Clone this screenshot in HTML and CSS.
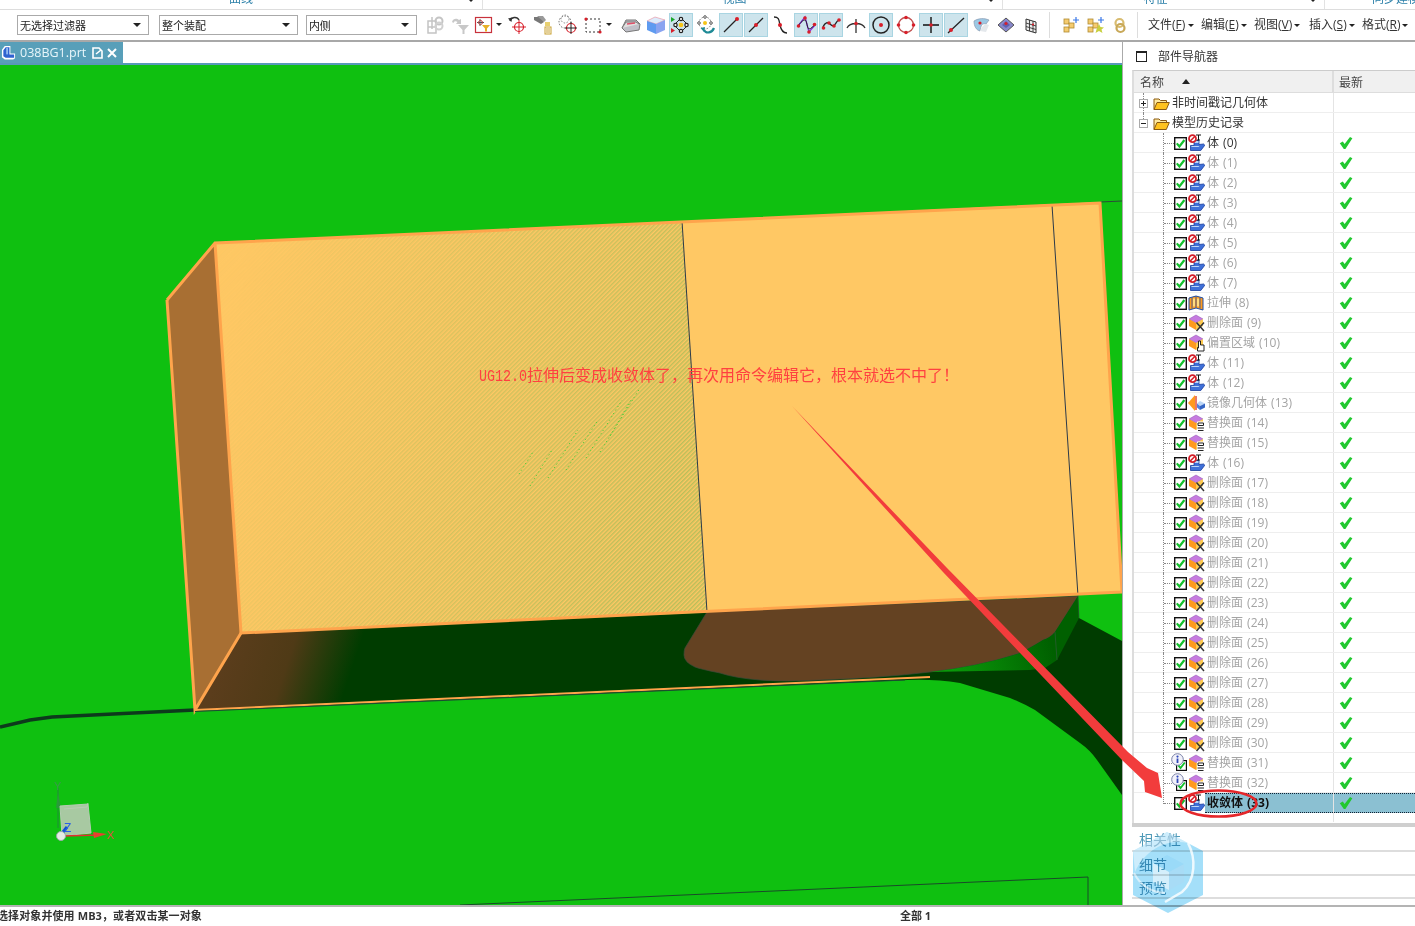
FILE: index.html
```html
<!DOCTYPE html>
<html lang="zh">
<head>
<meta charset="utf-8">
<title>038BG1.prt</title>
<link rel="stylesheet" href="styles.css">
</head>
<body>
<svg class="defs" width="0" height="0">
  <defs>
    <symbol id="i-chk" viewBox="0 0 13 13"><rect x=".7" y=".7" width="11.6" height="11.6" fill="#fff" stroke="#111" stroke-width="1.4"/><path d="M2.8 6.4 5.4 9.4 10.4 3" fill="none" stroke="#12c02c" stroke-width="2.2"/></symbol>
    <symbol id="i-ok" viewBox="0 0 14 14"><path d="M.8 7.2 3.8 5.4 5.6 8 11 1l2.4 1.2L6.4 13H4.8z" fill="#22c830"/></symbol>
    <symbol id="i-body" viewBox="0 0 17 18"><path d="M6 6.5h5v4l4.600-.5 1.200 1.200-4 5.300H2.500v-5H6z" fill="#3f70d8" stroke="#1c3e9c" stroke-width=".8"/><path d="M6.500 7h4v2h-4zM3.500 12h8l-1 1h-7z" fill="#bcd6f6"/><path d="M8 1h5M10.500 1v5M9 6h3" stroke="#111" fill="none"/><circle cx="4.500" cy="4.700" r="3.500" fill="#fff" stroke="#d4202a" stroke-width="1.800"/><path d="M2 7.200 7 2.200" stroke="#d4202a" stroke-width="1.600"/></symbol>
    <symbol id="i-del" viewBox="0 0 17 18"><path d="M8 1 15 5 8 9 1 5z" fill="#c67be0" stroke="#8d4fb0" stroke-width=".5"/><path d="M1 5 8 9V16L1 12z" fill="#ff9a1f"/><path d="M8 9 15 5V12L8 16z" fill="#ffcb50"/><path d="M8.500 8.500 16 17M16 8.500 8.500 17" stroke="#333" stroke-width="1.500"/></symbol>
    <symbol id="i-sub" viewBox="0 0 17 18"><path d="M8 1 15 5 8 9 1 5z" fill="#c67be0" stroke="#8d4fb0" stroke-width=".5"/><path d="M1 5 8 9V16L1 12z" fill="#ff9a1f"/><path d="M8 9 15 5V12L8 16z" fill="#ffcb50"/><rect x="9" y="7.500" width="7.500" height="9.500" fill="#fff"/><path d="M10 9h5.500M10 9v2.500h5.500V9M9.500 14h6.500M10 16.500h5.500" stroke="#222" fill="none"/></symbol>
    <symbol id="i-off" viewBox="0 0 17 18"><path d="M8 1 15 5 8 9 1 5z" fill="#c67be0" stroke="#8d4fb0" stroke-width=".5"/><path d="M1 5 8 9V16L1 12z" fill="#ff9a1f"/><path d="M8 9 15 5V12L8 16z" fill="#ffcb50"/><path d="M10.500 7h2v4h3.500v6H9.500v-3.500l1 .5z" fill="#fff" stroke="#111" stroke-width=".9"/></symbol>
    <symbol id="i-ext" viewBox="0 0 17 18"><path d="M1 4 8 2l7 2v12l-7-2-7 2z" fill="#ff9c20" stroke="#1f4fa8" stroke-width="1"/><path d="M8 2v12M4 3.500v11M12 3.500v11" stroke="#1f4fa8" stroke-width=".8"/><path d="M5 4.500h2v8H5zM9 4.500h2v8H9z" fill="#ffdc80"/></symbol>
    <symbol id="i-mir" viewBox="0 0 17 18"><path d="M7 1v16L0 9z" fill="#ff9a1f"/><path d="M8 2v14" stroke="#e0402a" stroke-width="1.400"/><path d="M12 7l5 2.500-5 2.500-3-2.500z" fill="#bcd6f6"/><path d="M9 9.500l3 2.500v4l-3-2.500z" fill="#4f80de"/><path d="M12 12l5-2.500v4L12 16z" fill="#3565c4"/></symbol>
    <symbol id="i-info" viewBox="0 0 13 13"><circle cx="6.500" cy="6.500" r="5.800" fill="#f2f2fa" stroke="#7a82a8"/><circle cx="6.500" cy="3.600" r="1.100" fill="#2f48b8"/><path d="M6.500 5.500v4.500" stroke="#2f48b8" stroke-width="1.800"/></symbol>
    <symbol id="i-folder" viewBox="0 0 17 15"><path d="M1 13.500V3h5l1.500 1.500h6V7" fill="#ffe9a0" stroke="#8a5a10"/><path d="M1 13.500 4 6.500h12.300l-3 7z" fill="#ffc21e" stroke="#8a5a10"/></symbol>
  </defs>
</svg>

<div class="strip">
  <div class="grp g1"><span class="gl">曲线</span></div>
  <div class="grp g2"><span class="gl">视图</span></div>
  <div class="grp g3"><span class="gl">特征</span></div>
  <div class="grp g4"><span class="gl">同步建模</span></div>
</div>

<div class="toolbar">
  <div class="sel s1">无选择过滤器</div>
  <div class="sel s2">整个装配</div>
  <div class="sel s3">内侧</div>
  <div class="btn">
    <svg viewBox="0 0 22 22"><path d="M4 7h8v12H4zM4 13h8M8 3v12" fill="none" stroke="#c4c4c4" stroke-width="1.500"/><circle cx="15" cy="7" r="3.500" fill="none" stroke="#c4c4c4" stroke-width="2"/><circle cx="15" cy="12" r="3.500" fill="none" stroke="#d0d0d0" stroke-width="2"/></svg>
  </div>
  <div class="btn">
    <svg viewBox="0 0 22 22"><path d="M3 8c1-4 5-4 7-2l2-1v5H7l1.500-2C7 7 5 7 4.500 9z" fill="#c8c8c8"/><path d="M9 11h11l-4.500 5v4h-2v-4z" fill="#c8c8c8"/></svg>
  </div>
  <div class="btn nar">
    <svg viewBox="0 0 22 22"><rect x="2.500" y="3.500" width="16" height="15" fill="#fff" stroke="#c8323c" stroke-width="1.200"/><path d="M7 5v7M4 8.500h7" stroke="#555"/><circle cx="7.500" cy="8.500" r="2" fill="none" stroke="#b44"/><path d="M9 11h8l-3 3.500v3h-2v-3z" fill="#e8b028"/></svg>
  </div>
  <div class="car"></div>
  <div class="btn">
    <svg viewBox="0 0 22 22"><circle cx="12" cy="13" r="4.500" fill="none" stroke="#d81f2a" stroke-width="1.200"/><path d="M12 6v14M5 13h14" stroke="#d81f2a"/><path d="M3 7c1-4 7-5 9-1" fill="none" stroke="#333" stroke-width="1.500"/><path d="M1 4.500 5 3.500 4.500 8z" fill="#333"/></svg>
  </div>
  <div class="btn">
    <svg viewBox="0 0 22 22"><path d="M2 3h7l3 5-3 2-7-4z" fill="#777"/><path d="M5 2h6l3 4-2 2z" fill="#999"/><rect x="13" y="8" width="5" height="4" fill="#e8d070"/><rect x="13" y="13" width="6" height="7" fill="#fff" stroke="#c8a030"/><path d="M15 14v5M17 14v5" stroke="#c8a030"/></svg>
  </div>
  <div class="btn">
    <svg viewBox="0 0 22 22"><circle cx="8" cy="8" r="6" fill="none" stroke="#666" stroke-dasharray="1.500 1.500"/><circle cx="8" cy="5" r="4" fill="none" stroke="#888" stroke-dasharray="1.500 1.500"/><circle cx="14" cy="14" r="4.500" fill="#fff" stroke="#d81f2a" stroke-width="1.200"/><path d="M14 8v12M8 14h12" stroke="#222"/></svg>
  </div>
  <div class="btn">
    <svg viewBox="0 0 22 22"><rect x="4" y="5" width="14" height="13" fill="none" stroke="#333" stroke-dasharray="2 2"/><circle cx="4" cy="5" r="1.600" fill="#d81f2a"/><circle cx="18" cy="18" r="1.600" fill="#d81f2a"/></svg>
  </div>
  <div class="car wide"></div>
  <div class="btn">
    <svg viewBox="0 0 22 22"><path d="M6 6h10l4 4-1 6-13 2-4-4z" fill="#c0c0c8" stroke="#777"/><path d="M2 14l4-6h10l3 2" fill="#e0e0e0" stroke="#777"/><path d="M7 10l8-1" stroke="#e0506a" stroke-width="1.500"/></svg>
  </div>
  <div class="btn">
    <svg viewBox="0 0 22 22"><path d="M2 7l8-4 10 3-9 4z" fill="#dcebfb" stroke="#e89aa8" stroke-width=".7"/><path d="M2 7l9 3v10l-9-4z" fill="#5f9bf0"/><path d="M11 10l9-4v10l-9 4z" fill="#8aa4f0"/></svg>
  </div>
  <div class="btn act">
    <svg viewBox="0 0 22 22"><path d="M11 4 18 11 11 18 4 11z" fill="none" stroke="#222"/><circle cx="11" cy="11" r="2.300" fill="#f5c518"/><g fill="#fff" stroke="#222" stroke-width="1.200"><circle cx="11" cy="5" r="1.700"/><circle cx="11" cy="17" r="1.700"/><circle cx="5.500" cy="11" r="1.700"/><circle cx="16.500" cy="11" r="1.700"/></g><path d="M1 3l4 2.500L1 8z" fill="#1aa82a"/><path d="M1 14l4 2.500L1 19z" fill="#d81f2a"/></svg>
  </div>
  <div class="btn">
    <svg viewBox="0 0 22 22"><circle cx="10" cy="9" r="6" fill="none" stroke="#777" stroke-dasharray="1.500 1.500"/><circle cx="10" cy="9" r="2" fill="#f5c518"/><g fill="#fff" stroke="#555"><circle cx="10" cy="3" r="1.300"/><circle cx="4" cy="9" r="1.300"/><circle cx="16" cy="9" r="1.300"/></g><path d="M9 16c2 4 8 3 10-2" fill="none" stroke="#1f8a96" stroke-width="2.200"/><path d="M5.500 14 10 13l-1 5z" fill="#1f8a96"/></svg>
  </div>
  <div class="btn act">
    <svg viewBox="0 0 22 22"><path d="M4 18 17 5" stroke="#222" stroke-width="1.300"/><circle cx="17" cy="5" r="2" fill="#d81f2a"/></svg>
  </div>
  <div class="btn act">
    <svg viewBox="0 0 22 22"><path d="M4 18 18 4" stroke="#222" stroke-width="1.300"/><circle cx="11" cy="11" r="2" fill="#d81f2a"/></svg>
  </div>
  <div class="btn">
    <svg viewBox="0 0 22 22"><path d="M4 3c5 0 5 3 6 8s3 8 7 8" fill="none" stroke="#222" stroke-width="1.300"/><circle cx="10" cy="11" r="2" fill="#d81f2a"/></svg>
  </div>
  <div class="btn act">
    <svg viewBox="0 0 22 22"><path d="M3 12 10 3l4 15 6-7" fill="none" stroke="#8a2be2" stroke-width="1.300"/><path d="M3 12c3-4 5-6 7-6s2 9 4 9 4-3 6-4" fill="none" stroke="#222"/><g fill="#d81f2a"><circle cx="3.500" cy="12" r="1.800"/><circle cx="10" cy="4" r="1.800"/><circle cx="14" cy="18" r="1.800"/><circle cx="19.500" cy="10.500" r="1.800"/></g></svg>
  </div>
  <div class="btn act">
    <svg viewBox="0 0 22 22"><path d="M3 13c2-5 5-5 7-3s4 3 6-1 3-2 4-3" fill="none" stroke="#222" stroke-width="1.400"/><g fill="#d81f2a"><circle cx="3.500" cy="14" r="1.800"/><circle cx="9" cy="9" r="1.800"/><circle cx="14" cy="12" r="1.800"/><circle cx="19" cy="6" r="1.800"/></g></svg>
  </div>
  <div class="btn">
    <svg viewBox="0 0 22 22"><path d="M2 14C5 8 17 8 20 14M11 5v14" fill="none" stroke="#333" stroke-width="1.300"/><circle cx="11" cy="9.500" r="1.800" fill="#d81f2a"/></svg>
  </div>
  <div class="btn act">
    <svg viewBox="0 0 22 22"><circle cx="11" cy="11" r="8" fill="none" stroke="#222" stroke-width="1.500"/><circle cx="11" cy="11" r="2" fill="#d81f2a"/></svg>
  </div>
  <div class="btn">
    <svg viewBox="0 0 22 22"><circle cx="11" cy="11" r="7.500" fill="none" stroke="#c05050" stroke-width="1.300"/><g fill="#d81f2a"><circle cx="11" cy="3.500" r="1.800"/><circle cx="11" cy="18.500" r="1.800"/><circle cx="3.500" cy="11" r="1.800"/><circle cx="18.500" cy="11" r="1.800"/></g></svg>
  </div>
  <div class="btn act">
    <svg viewBox="0 0 22 22"><path d="M11 3v16M3 11h16" stroke="#111" stroke-width="1.400"/><circle cx="11" cy="11" r="1.800" fill="#d81f2a"/></svg>
  </div>
  <div class="btn act">
    <svg viewBox="0 0 22 22"><path d="M3 19 19 4" stroke="#222" stroke-width="1.300"/><circle cx="6" cy="16" r="2" fill="#d81f2a"/></svg>
  </div>
  <div class="btn">
    <svg viewBox="0 0 22 22"><path d="M4 7c5-3 10-3 15-1l-3 4c-4-1-5 1-6 7-4-1-6-5-6-10z" fill="#9cc8e4" stroke="#8a9ab0" stroke-width=".7"/><path d="M10 17c2-4 3-6 6-7l3 1-3 7z" fill="#e4e8ec"/><circle cx="10" cy="9" r="1.600" fill="#d81f2a"/></svg>
  </div>
  <div class="btn">
    <svg viewBox="0 0 22 22"><path d="M3 11 11 4l8 7-8 7z" fill="#8888cc" stroke="#555"/><path d="M7 11l4-4 4 4-4 3z" fill="#6060b0"/><circle cx="11" cy="9.500" r="1.600" fill="#d81f2a"/></svg>
  </div>
  <div class="btn">
    <svg viewBox="0 0 22 22"><path d="M6 5l10 3v11L6 16z" fill="#eee" stroke="#333"/><path d="M9.500 6v11M13 7v11M6 9l10 3M6 12.500l10 3" stroke="#333" stroke-width=".9"/><circle cx="13" cy="10.500" r="1.100" fill="#d81f2a"/></svg>
  </div>
  <div class="sep s-a"></div>
  <div class="btn">
    <svg viewBox="0 0 22 22"><g fill="#f5cc70" stroke="#b08a30" stroke-width=".8"><rect x="5" y="5" width="5" height="5"/><rect x="5" y="13" width="5" height="5"/><rect x="10" y="9" width="5" height="5"/></g><path d="M17 3v6M14 6h6" stroke="#3a78e8" stroke-width="1.200"/></svg>
  </div>
  <div class="btn">
    <svg viewBox="0 0 22 22"><g fill="#f5cc70" stroke="#b08a30" stroke-width=".8"><rect x="4" y="5" width="5" height="5"/><rect x="4" y="13" width="5" height="5"/><rect x="9" y="9" width="5" height="5"/></g><path d="M15 10l1.500 3 3.500.5-2.500 2 1 3.500-3.500-2-3.500 2 1-3.500" fill="#c8d040"/><path d="M17 3v6M14 6h6" stroke="#3a78e8" stroke-width="1.200"/></svg>
  </div>
  <div class="btn">
    <svg viewBox="0 0 22 22"><circle cx="10.500" cy="9" r="4" fill="none" stroke="#d8bc70" stroke-width="2.200"/><circle cx="11.500" cy="14" r="4" fill="none" stroke="#c8a858" stroke-width="2.200"/></svg>
  </div>
  <div class="sep s-b"></div>
  <div class="menus">
    <div class="menu">文件(<u>F</u>)</div>
    <div class="menu">编辑(<u>E</u>)</div>
    <div class="menu m3">视图(<u>V</u>)</div>
    <div class="menu">插入(<u>S</u>)</div>
    <div class="menu">格式(<u>R</u>)</div>
  </div>
</div>

<div class="main">
  <div class="view">
    <div class="tabs">
      <div class="tab">
        <svg class="tab-ic" viewBox="0 0 16 16"><path d="M4 1h6v8h5v5l-2 1.500H4L1 13V5z" fill="#fff"/><path d="M5 2.500h4v7.500h5v3.500H5l-2.500-1.500V5.500z" fill="#2f62d0"/><path d="M5.500 3h2v7h-2z" fill="#8fb8f0"/></svg>
        <span class="tab-t">038BG1.prt</span>
        <svg class="tab-p" viewBox="0 0 11 12"><path d="M1 1h6l3 3v7H1z" fill="none" stroke="#fff" stroke-width="1.600"/><path d="M4 7 9 3" stroke="#fff" stroke-width="1.600"/></svg>
        <svg class="tab-x" viewBox="0 0 10 10"><path d="M1 1 9 9M9 1 1 9" stroke="#fff" stroke-width="2"/></svg>
      </div>
    </div>
    <div class="band"></div>
    <svg class="scene" viewBox="0 65 1122 840" width="1122" height="840">
      <defs>
        <pattern id="hatch" patternUnits="userSpaceOnUse" width="3" height="3" patternTransform="rotate(45)"><rect width="1.500" height="3" fill="#a8bc58"/></pattern>
        <linearGradient id="hfade" gradientUnits="userSpaceOnUse" x1="230" y1="300" x2="690" y2="420"><stop offset="0" stop-color="#fff" stop-opacity=".03"/><stop offset=".5" stop-color="#fff" stop-opacity=".45"/><stop offset="1" stop-color="#fff" stop-opacity=".8"/></linearGradient>
        <mask id="hmask" maskUnits="userSpaceOnUse" x="0" y="65" width="1122" height="840"><rect x="0" y="65" width="1122" height="840" fill="url(#hfade)"/></mask>
        <linearGradient id="under" gradientUnits="userSpaceOnUse" x1="225" y1="650" x2="345" y2="690"><stop offset="0" stop-color="#5b3d1c"/><stop offset=".5" stop-color="#4f3a16"/><stop offset="1" stop-color="#003c00"/></linearGradient>
        <linearGradient id="gfade" gradientUnits="userSpaceOnUse" x1="950" y1="670" x2="1050" y2="640"><stop offset="0" stop-color="#0a9a0a"/><stop offset="1" stop-color="#006000"/></linearGradient>
      </defs>
      <rect x="0" y="65" width="1122" height="840" fill="#0fc010"/>
      <path d="M0 727 30 720 52 717 195 710" fill="none" stroke="#0d3a1c" stroke-width="3.500"/>
      <path d="M241 633 1078 596 1079 618 1122 641V795L1097 760Q1090 750 1080 743L1035 710Q1025 704 1010 698L960 683Q935 679 908 680L195 711z" fill="#003c00"/>
      <path d="M241 633 195 710 352 703 372 627z" fill="url(#under)"/>
      <path d="M707 612 1078 596 1055 632Q1050 638 1043 640 1030 648 1020 653 980 666 930 672 880 678 820 680 785 682 760 680 735 678 720 673 700 669 695 667 684 662 684 655 684 650 685 648z" fill="#644222" stroke="#3f4a3a" stroke-width=".7"/>
      <path d="M1078 596 1055 632Q1050 638 1043 640 1030 648 1020 653 980 666 930 672L1030 670 1045 668 1057 660 1079 618z" fill="url(#gfade)"/>
      <path d="M1055 632 1057 660M1079 618 1078 596" stroke="#2f5a3a" stroke-width=".7"/>
      <path d="M167 300 215 243 241 633 195 710z" fill="#a86f33"/>
      <path d="M215 243 1100 202 1122 592 241 633z" fill="#ffc864"/>
      <path d="M215 243 682 221 707 612 241 633z" fill="url(#hatch)" mask="url(#hmask)"/>
      <path d="M519 474l14-22M530 486l22-36M548 478l30-48M566 470l32-50M586 458l36-58M610 436l22-38M600 452l40-64" fill="none" stroke="#35d030" stroke-width="1" stroke-dasharray="1 3"/>
      <path d="M682 221 707 612M1052 205 1078 596" stroke="#2c3a4a" stroke-width="1"/>
      <path d="M1100 202 1122 201" stroke="#2c4a3a"/>
      <g fill="none" stroke="#ffa44c" stroke-width="3">
        <path d="M167 300 215 243 1100 203 1122 592 241 633 215 243"/>
        <path d="M167 300 195 710 241 633"/>
      </g>
      <path d="M195 710 930 677" stroke="#ffa44c" stroke-width="2"/>
      <path d="M195 711.500 905 680" stroke="#1d4a34" stroke-width="1"/>
      <path d="M460 905 1088 877V905" fill="none" stroke="#1a4a2a"/>
      <g class="gizmo">
        <path d="M58 788V828" stroke="#1c9c2c" stroke-width="1.500"/>
        <path d="M56 808 58 792 61 808z" fill="#2a9a3a"/>
        <path d="M60 806 88 804 91 833 62 836z" fill="#a8c9a2" stroke="#b5ccb2"/>
        <path d="M64 809 87 807 88 803" fill="none" stroke="#b8ccb4"/>
        <path d="M62 836 100 835" stroke="#e03030" stroke-width="1.500"/>
        <path d="M93 832 107 834 94 838z" fill="#e84030"/>
        <path d="M60 836 67 827" stroke="#0c50d0" stroke-width="3"/>
        <circle cx="61" cy="836" r="4.500" fill="#e4ece4" stroke="#9aa"/>
        <text class="ax ax-y" x="54" y="790">Y</text>
        <text class="ax ax-x" x="107" y="839">X</text>
        <text class="ax ax-z" x="64" y="832">Z</text>
      </g>
    </svg>
  </div>

  <div class="panel">
    <div class="ptitle"><span class="pbox"></span><span>部件导航器</span></div>
    <div class="tree">
      <div class="head"><div class="hn">名称<i class="sort"></i></div><div class="hl">最新</div></div>

      <div class="row top tl1"><div class="name"><i class="exp plus"></i><svg class="fold"><use href="#i-folder"/></svg><span class="lbl">非时间戳记几何体</span></div><div class="new"></div></div>
      <div class="row top tl2"><div class="name"><i class="exp"></i><svg class="fold"><use href="#i-folder"/></svg><span class="lbl">模型历史记录</span></div><div class="new"></div></div>

      <div class="row"><div class="name"><i class="conn"></i><svg class="chk"><use href="#i-chk"/></svg><svg class="ic"><use href="#i-body"/></svg><span class="lbl">体 (0)</span></div><div class="new"><svg class="ok"><use href="#i-ok"/></svg></div></div>
      <div class="row"><div class="name"><i class="conn"></i><svg class="chk"><use href="#i-chk"/></svg><svg class="ic"><use href="#i-body"/></svg><span class="lbl dim">体 (1)</span></div><div class="new"><svg class="ok"><use href="#i-ok"/></svg></div></div>
      <div class="row"><div class="name"><i class="conn"></i><svg class="chk"><use href="#i-chk"/></svg><svg class="ic"><use href="#i-body"/></svg><span class="lbl dim">体 (2)</span></div><div class="new"><svg class="ok"><use href="#i-ok"/></svg></div></div>
      <div class="row"><div class="name"><i class="conn"></i><svg class="chk"><use href="#i-chk"/></svg><svg class="ic"><use href="#i-body"/></svg><span class="lbl dim">体 (3)</span></div><div class="new"><svg class="ok"><use href="#i-ok"/></svg></div></div>
      <div class="row"><div class="name"><i class="conn"></i><svg class="chk"><use href="#i-chk"/></svg><svg class="ic"><use href="#i-body"/></svg><span class="lbl dim">体 (4)</span></div><div class="new"><svg class="ok"><use href="#i-ok"/></svg></div></div>
      <div class="row"><div class="name"><i class="conn"></i><svg class="chk"><use href="#i-chk"/></svg><svg class="ic"><use href="#i-body"/></svg><span class="lbl dim">体 (5)</span></div><div class="new"><svg class="ok"><use href="#i-ok"/></svg></div></div>
      <div class="row"><div class="name"><i class="conn"></i><svg class="chk"><use href="#i-chk"/></svg><svg class="ic"><use href="#i-body"/></svg><span class="lbl dim">体 (6)</span></div><div class="new"><svg class="ok"><use href="#i-ok"/></svg></div></div>
      <div class="row"><div class="name"><i class="conn"></i><svg class="chk"><use href="#i-chk"/></svg><svg class="ic"><use href="#i-body"/></svg><span class="lbl dim">体 (7)</span></div><div class="new"><svg class="ok"><use href="#i-ok"/></svg></div></div>
      <div class="row"><div class="name"><i class="conn"></i><svg class="chk"><use href="#i-chk"/></svg><svg class="ic"><use href="#i-ext"/></svg><span class="lbl dim">拉伸 (8)</span></div><div class="new"><svg class="ok"><use href="#i-ok"/></svg></div></div>
      <div class="row"><div class="name"><i class="conn"></i><svg class="chk"><use href="#i-chk"/></svg><svg class="ic"><use href="#i-del"/></svg><span class="lbl dim">删除面 (9)</span></div><div class="new"><svg class="ok"><use href="#i-ok"/></svg></div></div>
      <div class="row"><div class="name"><i class="conn"></i><svg class="chk"><use href="#i-chk"/></svg><svg class="ic"><use href="#i-off"/></svg><span class="lbl dim">偏置区域 (10)</span></div><div class="new"><svg class="ok"><use href="#i-ok"/></svg></div></div>
      <div class="row"><div class="name"><i class="conn"></i><svg class="chk"><use href="#i-chk"/></svg><svg class="ic"><use href="#i-body"/></svg><span class="lbl dim">体 (11)</span></div><div class="new"><svg class="ok"><use href="#i-ok"/></svg></div></div>
      <div class="row"><div class="name"><i class="conn"></i><svg class="chk"><use href="#i-chk"/></svg><svg class="ic"><use href="#i-body"/></svg><span class="lbl dim">体 (12)</span></div><div class="new"><svg class="ok"><use href="#i-ok"/></svg></div></div>
      <div class="row"><div class="name"><i class="conn"></i><svg class="chk"><use href="#i-chk"/></svg><svg class="ic"><use href="#i-mir"/></svg><span class="lbl dim">镜像几何体 (13)</span></div><div class="new"><svg class="ok"><use href="#i-ok"/></svg></div></div>
      <div class="row"><div class="name"><i class="conn"></i><svg class="chk"><use href="#i-chk"/></svg><svg class="ic"><use href="#i-sub"/></svg><span class="lbl dim">替换面 (14)</span></div><div class="new"><svg class="ok"><use href="#i-ok"/></svg></div></div>
      <div class="row"><div class="name"><i class="conn"></i><svg class="chk"><use href="#i-chk"/></svg><svg class="ic"><use href="#i-sub"/></svg><span class="lbl dim">替换面 (15)</span></div><div class="new"><svg class="ok"><use href="#i-ok"/></svg></div></div>
      <div class="row"><div class="name"><i class="conn"></i><svg class="chk"><use href="#i-chk"/></svg><svg class="ic"><use href="#i-body"/></svg><span class="lbl dim">体 (16)</span></div><div class="new"><svg class="ok"><use href="#i-ok"/></svg></div></div>
      <div class="row"><div class="name"><i class="conn"></i><svg class="chk"><use href="#i-chk"/></svg><svg class="ic"><use href="#i-del"/></svg><span class="lbl dim">删除面 (17)</span></div><div class="new"><svg class="ok"><use href="#i-ok"/></svg></div></div>
      <div class="row"><div class="name"><i class="conn"></i><svg class="chk"><use href="#i-chk"/></svg><svg class="ic"><use href="#i-del"/></svg><span class="lbl dim">删除面 (18)</span></div><div class="new"><svg class="ok"><use href="#i-ok"/></svg></div></div>
      <div class="row"><div class="name"><i class="conn"></i><svg class="chk"><use href="#i-chk"/></svg><svg class="ic"><use href="#i-del"/></svg><span class="lbl dim">删除面 (19)</span></div><div class="new"><svg class="ok"><use href="#i-ok"/></svg></div></div>
      <div class="row"><div class="name"><i class="conn"></i><svg class="chk"><use href="#i-chk"/></svg><svg class="ic"><use href="#i-del"/></svg><span class="lbl dim">删除面 (20)</span></div><div class="new"><svg class="ok"><use href="#i-ok"/></svg></div></div>
      <div class="row"><div class="name"><i class="conn"></i><svg class="chk"><use href="#i-chk"/></svg><svg class="ic"><use href="#i-del"/></svg><span class="lbl dim">删除面 (21)</span></div><div class="new"><svg class="ok"><use href="#i-ok"/></svg></div></div>
      <div class="row"><div class="name"><i class="conn"></i><svg class="chk"><use href="#i-chk"/></svg><svg class="ic"><use href="#i-del"/></svg><span class="lbl dim">删除面 (22)</span></div><div class="new"><svg class="ok"><use href="#i-ok"/></svg></div></div>
      <div class="row"><div class="name"><i class="conn"></i><svg class="chk"><use href="#i-chk"/></svg><svg class="ic"><use href="#i-del"/></svg><span class="lbl dim">删除面 (23)</span></div><div class="new"><svg class="ok"><use href="#i-ok"/></svg></div></div>
      <div class="row"><div class="name"><i class="conn"></i><svg class="chk"><use href="#i-chk"/></svg><svg class="ic"><use href="#i-del"/></svg><span class="lbl dim">删除面 (24)</span></div><div class="new"><svg class="ok"><use href="#i-ok"/></svg></div></div>
      <div class="row"><div class="name"><i class="conn"></i><svg class="chk"><use href="#i-chk"/></svg><svg class="ic"><use href="#i-del"/></svg><span class="lbl dim">删除面 (25)</span></div><div class="new"><svg class="ok"><use href="#i-ok"/></svg></div></div>
      <div class="row"><div class="name"><i class="conn"></i><svg class="chk"><use href="#i-chk"/></svg><svg class="ic"><use href="#i-del"/></svg><span class="lbl dim">删除面 (26)</span></div><div class="new"><svg class="ok"><use href="#i-ok"/></svg></div></div>
      <div class="row"><div class="name"><i class="conn"></i><svg class="chk"><use href="#i-chk"/></svg><svg class="ic"><use href="#i-del"/></svg><span class="lbl dim">删除面 (27)</span></div><div class="new"><svg class="ok"><use href="#i-ok"/></svg></div></div>
      <div class="row"><div class="name"><i class="conn"></i><svg class="chk"><use href="#i-chk"/></svg><svg class="ic"><use href="#i-del"/></svg><span class="lbl dim">删除面 (28)</span></div><div class="new"><svg class="ok"><use href="#i-ok"/></svg></div></div>
      <div class="row"><div class="name"><i class="conn"></i><svg class="chk"><use href="#i-chk"/></svg><svg class="ic"><use href="#i-del"/></svg><span class="lbl dim">删除面 (29)</span></div><div class="new"><svg class="ok"><use href="#i-ok"/></svg></div></div>
      <div class="row"><div class="name"><i class="conn"></i><svg class="chk"><use href="#i-chk"/></svg><svg class="ic"><use href="#i-del"/></svg><span class="lbl dim">删除面 (30)</span></div><div class="new"><svg class="ok"><use href="#i-ok"/></svg></div></div>
      <div class="row"><div class="name"><i class="conn"></i><span class="cell-info"><svg class="chk sm"><use href="#i-chk"/></svg><svg class="inf"><use href="#i-info"/></svg></span><svg class="ic"><use href="#i-sub"/></svg><span class="lbl dim">替换面 (31)</span></div><div class="new"><svg class="ok"><use href="#i-ok"/></svg></div></div>
      <div class="row"><div class="name"><i class="conn"></i><span class="cell-info"><svg class="chk sm"><use href="#i-chk"/></svg><svg class="inf"><use href="#i-info"/></svg></span><svg class="ic"><use href="#i-sub"/></svg><span class="lbl dim">替换面 (32)</span></div><div class="new"><svg class="ok"><use href="#i-ok"/></svg></div></div>
      <div class="row cur"><div class="name"><i class="conn end"></i><svg class="chk"><use href="#i-chk"/></svg><svg class="ic"><use href="#i-body"/></svg><span class="lbl">收敛体 (33)</span></div><div class="new"><svg class="ok"><use href="#i-ok"/></svg></div></div>
      <div class="filler"></div>
    </div>
    <div class="bar"></div>
    <div class="sect s-rel">相关性</div>
    <div class="sect">细节</div>
    <div class="sect s-pre">预览</div>
  </div>
</div>

<div class="status">
  <span class="st-a">选择对象并使用 MB3，或者双击某一对象</span>
  <span class="st-b">全部 1</span>
</div>

<svg class="over" viewBox="0 0 1415 926" width="1415" height="926">
  <g class="mul">
    <path d="M1167 832 1203 851V895L1168 913 1133 895V851z" fill="#a4dff9"/>
    <path d="M1153 863 1169 872V890L1153 882z" fill="#d4effb"/>
    <path d="M1169 872 1184 864V882L1169 890z" fill="#a8dcf6"/>
  </g>
  <path class="wash" d="M1133 851 1167 832 1188 843C1164 838 1144 852 1135 872z" fill="#fff"/>
  <path d="M1188 843C1196 858 1196 880 1182 892L1165 902" fill="none" stroke="#fff" stroke-width="2.500" opacity=".8"/>
  <path d="M1134 873C1140 885 1150 892 1165 893" fill="none" stroke="#fff" stroke-width="2" opacity=".55"/>
  <path class="mul" d="M1153 863 1167 855 1184 864 1169 872z" fill="#f0fafe"/>
  <path d="M792 406 947 568 1128 752 1147 768 1158 773 1162 798 1145 792 1144 781 1122 760 943 572z" fill="#f23c3c"/>
  <ellipse cx="1218.500" cy="803.500" rx="38" ry="13" fill="none" stroke="#e4262a" stroke-width="2.500"/>
</svg>
<div class="note"><span class="lat">UG12.0</span>拉伸后变成收敛体了，再次用命令编辑它，根本就选不中了！</div>
</body>
</html>
```

FILE: styles.css
```css
* { box-sizing: border-box; }
html, body { margin: 0; padding: 0; }
body {
  width: 1415px;
  height: 926px;
  overflow: hidden;
  background: #fff;
  position: relative;
  font: 12px/20px "Open Sans", "Noto Sans CJK SC", sans-serif;
  color: #333;
}
.defs { position: absolute; }

.strip { display: flex; height: 10px; border-bottom: 1px solid #ddd; overflow: hidden; }
.grp { position: relative; text-align: center; height: 9px; overflow: hidden; color: #2a7fa8; }
.gl { display: block; line-height: 12px; margin-top: -7px; }
.g1 { width: 483px; border-right: 1px solid #e2e2e2; }
.g2 { width: 520px; padding-right: 16px; border-right: 1px solid #e2e2e2; }
.g3 { width: 322px; padding-right: 16px; border-right: 1px solid #e2e2e2; }
.g4 { width: 90px; text-align: left; padding-left: 47px; white-space: nowrap; }
.g1::after, .g2::after, .g3::after {
  content: ""; position: absolute; right: 9px; top: 0;
  border: 2px solid transparent; border-top-color: #222;
}

.toolbar { display: flex; align-items: center; height: 32px; padding: 0 0 0 17px; border-bottom: 2px solid #a8a8a8; }
.sel {
  position: relative; height: 20px; border: 1px solid #aaa; background: #fff;
  font-size: 11px; line-height: 19px; padding-left: 2px; color: #222;
}
.sel::after {
  content: ""; position: absolute; right: 7px; top: 7px;
  border: 4px solid transparent; border-top: 4px solid #222; border-bottom: 0;
}
.s1 { width: 133px; margin-right: 10px; }
.s2 { width: 140px; margin-right: 8px; }
.s3 { width: 112px; margin-right: 5px; }
.btn { width: 25px; height: 23px; display: flex; align-items: center; justify-content: center; flex: none; }
.btn svg { width: 22px; height: 22px; display: block; }
.nar { width: 23px; }
.act svg { background: #cde4ec; outline: 1px solid #a9d5e2; }
.car { width: 10px; height: 8px; flex: none; position: relative; }
.car::after {
  content: ""; position: absolute; left: 1px; top: 2px;
  border: 3px solid transparent; border-top: 3px solid #222; border-bottom: 0;
}
.wide { width: 13px; }
.sep { width: 1px; height: 26px; background: #ddd; flex: none; }
.s-a { margin: 0 7px 0 6px; }
.s-b { margin: 0 10px 0 5px; }
.menus { display: flex; }
.menu { position: relative; width: 53px; white-space: nowrap; color: #333; font-size: 12px; }
.m3 { width: 55px; }
.menu::after {
  content: ""; position: absolute; left: 40px; top: 9px;
  border: 3px solid transparent; border-top: 3px solid #222; border-bottom: 0;
}

.main { display: flex; height: 863px; }
.view { width: 1122px; flex: none; }
.tabs { height: 21px; display: flex; }
.tab { width: 123px; height: 21px; background: #589fb9; display: flex; align-items: center; color: #e8f6fa; padding-left: 1px; }
.tab-ic { width: 15px; height: 15px; flex: none; }
.tab-t { margin-left: 4px; font-size: 12.500px; width: 72px; white-space: nowrap; }
.tab-p { width: 11px; height: 12px; flex: none; }
.tab-x { width: 10px; height: 10px; flex: none; margin-left: 4px; }
.band { height: 2px; background: #5898b8; }
.scene { display: block; }
.ax { font: 11px "Liberation Sans", sans-serif; }
.ax-y { fill: #3a9a4a; }
.ax-x { fill: #e85040; }
.ax-z { fill: #2a60e8; font-size: 12px; }

.panel { width: 293px; flex: none; border-left: 1px solid #aaa; padding-left: 9px; position: relative; }
.ptitle { height: 28px; display: flex; align-items: center; padding: 1px 0 0 4px; font-size: 12px; color: #333; }
.pbox { width: 11px; height: 11px; border: 1.500px solid #222; border-top-width: 2px; margin-right: 11px; }
.tree { height: 753px; border-top: 1px solid #ccc; border-left: 2px solid #ddd; }
.head { display: flex; height: 22px; background: #f0f0f0; border-bottom: 1px solid #ddd; color: #444; line-height: 23px; }
.hn { width: 200px; padding-left: 6px; border-right: 2px solid #ddd; position: relative; }
.hl { padding-left: 5px; }
.sort {
  position: absolute; left: 48px; top: 8px;
  border: 4px solid transparent; border-bottom: 5px solid #222; border-top: 0;
}
.row { display: flex; height: 20px; border-bottom: 1px solid #eee; position: relative; }
.name { width: 200px; flex: none; display: flex; align-items: flex-start; border-right: 1px solid #e4e4e4; white-space: nowrap; }
.new { flex: 1; padding-left: 5px; }
.lbl { padding-left: 2px; height: 19px; line-height: 19px; color: #333; word-spacing: 1px; }
.dim { color: #a4a4a4; }
.top::before {
  content: ""; position: absolute; left: 9px; top: 0; height: 20px;
  border-left: 1px dotted #888;
}
.tl2::before { height: 6px; }
.exp {
  position: relative; width: 9px; height: 9px; margin: 6px 0 0 5px; flex: none;
  border: 1px solid #aaa; background: #fff;
}
.exp::before { content: ""; position: absolute; left: 1px; right: 1px; top: 3px; height: 1px; background: #222; }
.plus::after { content: ""; position: absolute; top: 1px; bottom: 1px; left: 3px; width: 1px; background: #222; }
.fold { width: 17px; height: 15px; margin: 3px 0 0 5px; flex: none; }
.conn {
  position: relative; width: 11px; height: 20px; margin-left: 29px; flex: none;
  border-left: 1px dotted #888;
}
.conn::after { content: ""; position: absolute; left: 0; right: 0; top: 10px; border-top: 1px dotted #888; }
.end { height: 11px; }
.chk { width: 13px; height: 13px; margin-top: 4px; flex: none; }
.cell-info { width: 13px; height: 20px; flex: none; position: relative; }
.sm { position: absolute; left: 2px; top: 7px; width: 11px; height: 11px; margin: 0; }
.inf { position: absolute; left: -3px; top: 0; width: 13px; height: 13px; }
.ic { width: 17px; height: 18px; margin: 1px 0 0 1px; flex: none; }
.ok { width: 14px; height: 14px; margin-top: 3px; display: block; }
.cur .lbl {
  flex: 1; height: 20px; background: #8bc0d2; color: #111; font-weight: 700;
  border-top: 1px dotted #123; border-bottom: 1px dotted #123; line-height: 18px;
}
.cur .new { background: #8bc0d2; border-top: 1px dotted #123; border-bottom: 1px dotted #123; }
.cur .ok { margin-top: 2px; }
.cur { border-bottom: 0; }
.filler { height: 9px; width: 200px; border-right: 1px solid #e4e4e4; }
.bar { height: 4px; background: #cfcfcf; }
.sect {
  height: 24px; line-height: 26px; padding-left: 7px; font-size: 14px; color: #4f9ab8;
  border-bottom: 2px solid #ddd; background: #fff;
}
.s-rel { height: 25px; }
.s-pre { height: 23px; line-height: 24px; }

.status { display: flex; height: 21px; border-top: 2px solid #b4b4b4; font-size: 11px; line-height: 18px; font-weight: 700; color: #333; white-space: nowrap; }
.st-a { width: 900px; flex: none; margin-left: -3px; letter-spacing: .1px; }
.st-b { margin-left: 3px; }

.over { position: absolute; left: 0; top: 0; pointer-events: none; }
.mul { mix-blend-mode: multiply; }
.wash { opacity: .45; }
.note {
  position: absolute; left: 479px; top: 364px; white-space: nowrap;
  font: 16px/20px "Noto Sans CJK SC", sans-serif;
  color: #ff4040;
}
.lat {
  display: inline-block; width: 48px; font-family: "Liberation Mono", monospace;
  transform: scaleX(.833); transform-origin: left center;
}
```
